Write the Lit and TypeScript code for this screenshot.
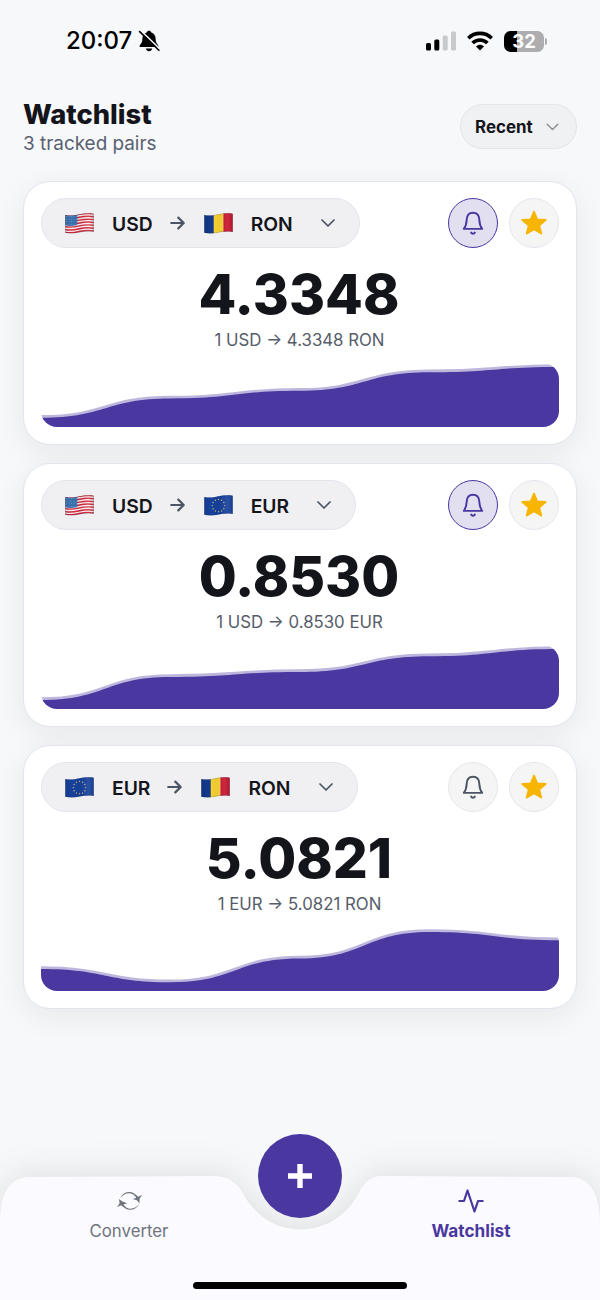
import { LitElement, html, css, svg } from "lit";
import { customElement, property } from "lit/decorators.js";

type Code = "USD" | "RON" | "EUR";

interface Pair {
  from: Code;
  to: Code;
  rate: string;
  alert: boolean;
  points: number[];
}

const PAIRS: Pair[] = [
  { from: "USD", to: "RON", rate: "4.3348", alert: true, points: [54.8, 35.5, 27.7, 9.2, 4] },
  { from: "USD", to: "EUR", rate: "0.8530", alert: true, points: [55, 32, 27, 11.2, 4] },
  { from: "EUR", to: "RON", rate: "5.0821", alert: false, points: [42, 55.3, 31.5, 5, 13.3] },
];

const WAVE = "M.3 2.2C5 3.6 9.6 2.6 14.5 1.5S24.500 .3 28.700 1V19.200C24.500 18.300 19.500 18.700 14.500 19.800S5 21.300 .3 20Z";

@customElement("currency-flag")
export class CurrencyFlag extends LitElement {
  @property() code: Code = "USD";

  static styles = css`
    :host { display: block; width: 29px; height: 22px; }
    svg { display: block; }
  `;

  private art() {
    if (this.code === "RON") {
      return svg`
        <rect width="10" height="22" fill="#12398b"></rect>
        <rect x="9.700" width="9.800" height="22" fill="#fcd533"></rect>
        <rect x="19.400" width="10" height="22" fill="#c8152d"></rect>`;
    }
    if (this.code === "EUR") {
      const stars = Array.from({ length: 12 }, (_, i) => {
        const a = (i * Math.PI) / 6;
        return svg`<circle cx=${14.5 + 6.2 * Math.sin(a)} cy=${10.9 - 6.2 * Math.cos(a)} r=".7" fill="#c9bd78"></circle>`;
      });
      return svg`<rect width="29" height="22" fill="#17419d"></rect>${stars}`;
    }
    const stripes = Array.from({ length: 7 }, (_, i) => {
      const y = 2.4 + i * 2.86;
      return svg`<path d="M0 ${y}C5 ${y + 1.4} 9.600 ${y + 0.4} 14.500 ${y - 0.7}S24.500 ${y - 1.9} 29 ${y - 1.2}" fill="none" stroke="#d5283d" stroke-width="1.450"></path>`;
    });
    const dots = Array.from({ length: 20 }, (_, i) => svg`<circle cx=${1.8 + (i % 5) * 2.4} cy=${4 + Math.floor(i / 5) * 2.5} r=".4" fill="#9cc0e2"></circle>`);
    return svg`
      <rect width="29" height="22" fill="#fbf3f4"></rect>${stripes}
      <path d="M0 1.500C4 3.600 9 2.800 12.300 1.700V12.200C8 13.400 4 13.800 0 12.600Z" fill="#3972b0"></path>${dots}`;
  }

  render() {
    return html`
      <svg width="29" height="22" viewBox="0 -.7 29 22">
        <defs>
          <clipPath id="wave"><path d=${WAVE}></path></clipPath>
          <linearGradient id="shade" x1="0" x2="1" y1="0" y2="0">
            <stop offset="0" stop-color="#000" stop-opacity=".1"></stop>
            <stop offset=".25" stop-color="#000" stop-opacity="0"></stop>
            <stop offset=".5" stop-color="#000" stop-opacity=".06"></stop>
            <stop offset=".8" stop-color="#fff" stop-opacity=".08"></stop>
            <stop offset="1" stop-color="#000" stop-opacity=".14"></stop>
          </linearGradient>
        </defs>
        <g clip-path="url(#wave)">
          ${this.art()}
          <rect width="29" height="22" fill="url(#shade)"></rect>
          <path d=${WAVE} fill="none" stroke="#1b2545" stroke-opacity=".3" stroke-width="1.200"></path>
        </g>
      </svg>`;
  }
}

@customElement("trend-area")
export class TrendArea extends LitElement {
  @property({ attribute: false }) points: number[] = [];

  static styles = css`
    :host { display: block; height: 64px; border-radius: 16px; overflow: hidden; }
    svg { display: block; width: 100%; height: 64px; }
    .fill { fill: #4a38a0; }
    .edge { fill: none; stroke: #4a38a0; stroke-opacity: .36; stroke-width: 5.4; }
  `;

  render() {
    const step = 518 / (this.points.length - 1);
    let line = `M0 ${this.points[0]}`;
    for (let i = 1; i < this.points.length; i++) {
      const mid = (i - 0.5) * step;
      line += `C${mid} ${this.points[i - 1]} ${mid} ${this.points[i]} ${i * step} ${this.points[i]}`;
    }
    return html`
      <svg viewBox="0 0 518 64" preserveAspectRatio="none">
        <path class="edge" d=${line}></path>
        <path class="fill" d="${line}V64H0Z"></path>
      </svg>`;
  }
}

@customElement("pair-card")
export class PairCard extends LitElement {
  @property({ attribute: false }) pair!: Pair;

  static styles = css`
    :host {
      display: block;
      box-sizing: border-box;
      height: 264px;
      padding: 16px 17px 17px;
      border: 1px solid #e2e5ee;
      border-radius: 27px;
      background: #fff;
      box-shadow: 0 8px 30px rgba(25, 30, 35, .07);
    }
    .top { display: flex; align-items: center; gap: 11.5px; }
    .pill {
      display: flex;
      align-items: center;
      box-sizing: border-box;
      height: 50px;
      padding: 0 24px 0 23px;
      border: 1px solid #e3e5ed;
      border-radius: 25px;
      background: #f0f0f3;
      margin-right: auto;
    }
    .code { margin-left: 18px; padding-top: 1px; font-size: 19.3px; font-weight: 600; color: #14151b; line-height: 24px; }
    .arrow { margin: 0 19px 0 17px; }
    .down { margin-left: 28px; }
    svg { display: block; }
    .round {
      display: grid;
      place-items: center;
      box-sizing: border-box;
      width: 50px;
      height: 50px;
      border: 1px solid #e5e7ee;
      border-radius: 50%;
      background: #f5f5f6;
      color: #4b5563;
    }
    .round.on { border: 1.5px solid #4a38a0; background: #e2dff0; color: #4a38a0; }
    .rate {
      margin-top: 16px;
      padding-right: 2px;
      text-align: center;
      font-size: 55px;
      line-height: 60px;
      font-weight: 800;
      color: #14151b;
    }
    .note {
      margin: 6px 0 13px;
      padding-right: 1px;
      text-align: center;
      font-size: 16.8px;
      line-height: 20px;
      color: #565c69;
    }
  `;

  render() {
    const p = this.pair;
    return html`
      <div class="top">
        <div class="pill">
          <currency-flag .code=${p.from}></currency-flag>
          <span class="code">${p.from}</span>
          <svg class="arrow" width="15" height="14" viewBox="0 0 15 14" fill="none" stroke="#4b5563" stroke-width="2.200" stroke-linecap="round" stroke-linejoin="round"><path d="M1.200 7H13.500M8.300 1.600 13.700 7 8.300 12.400"></path></svg>
          <currency-flag .code=${p.to}></currency-flag>
          <span class="code">${p.to}</span>
          <svg class="down" width="14" height="8" viewBox="0 0 14 8" fill="none" stroke="#4b5563" stroke-width="1.700" stroke-linecap="round" stroke-linejoin="round"><path d="M1 1 7 7 13 1"></path></svg>
        </div>
        <div class="round ${p.alert ? "on" : ""}">
          <svg width="24" height="26" viewBox="0 0 24 26" fill="none" stroke="currentColor" stroke-width="1.900" stroke-linecap="round" stroke-linejoin="round">
            <path d="M2.800 18.900C4.700 16.500 5.500 14.200 5.700 9.600C5.900 5.400 7.800 2.700 12 2.700S18.100 5.400 18.300 9.600C18.500 14.200 19.300 16.500 21.200 18.900Z"></path>
            <path d="M10.100 22.500C10.800 24.100 13.200 24.100 13.900 22.500"></path>
          </svg>
        </div>
        <div class="round">
          <svg width="26" height="26" viewBox="0 0 26 26" fill="#f7b500" stroke="#f7b500" stroke-width="2" stroke-linejoin="round">
            <path d="M13 1.800 16.100 9.400 24.600 10 18.100 15.400 20.200 23.500 13 19.100 5.800 23.500 7.900 15.400 1.400 10 9.900 9.400Z"></path>
          </svg>
        </div>
      </div>
      <div class="rate">${p.rate}</div>
      <div class="note">1 ${p.from} → ${p.rate} ${p.to}</div>
      <trend-area .points=${p.points}></trend-area>`;
  }
}

@customElement("app-root")
export class AppRoot extends LitElement {
  static styles = css`
    :host {
      display: flex;
      flex-direction: column;
      box-sizing: border-box;
      width: 600px;
      height: 1300px;
      overflow: hidden;
      background: #f7f8fa;
      font-family: Inter, "Liberation Sans", sans-serif;
      color: #14151b;
    }
    svg { display: block; }
    .status { display: flex; align-items: center; height: 82px; padding: 0 53px 0 66px; color: #000; }
    .time { font-size: 24px; font-weight: 550; line-height: 28px; width: 67px; white-space: nowrap; }
    .muted { margin: 0 auto 0 5px; }
    .wifi { margin: 0 11px 0 11px; }
    .battery {
      display: grid;
      place-items: center;
      box-sizing: border-box;
      width: 40px;
      height: 21px;
      padding-left: 1px;
      border-radius: 6.500px;
      background: linear-gradient(90deg, #000 13px, #adadaf 13px);
      color: #fff;
      font-size: 18.500px;
      font-weight: 700;
      line-height: 21px;
    }
    .nub { width: 2px; height: 7px; margin-left: 1.500px; border-radius: 0 3px 3px 0; background: #adadaf; }
    .head { display: flex; justify-content: space-between; align-items: flex-start; padding: 19px 23px 0; height: 80px; }
    .title { margin: 0; font-size: 27.300px; line-height: 28px; font-weight: 800; }
    .sub { padding-top: 1px; font-size: 18.900px; line-height: 28px; color: #596070; }
    .sort {
      display: flex;
      align-items: center;
      justify-content: space-between;
      box-sizing: border-box;
      width: 117px;
      height: 45px;
      margin-top: 3px;
      padding: 0 17px 0 14px;
      border: 1px solid #e3e5ec;
      border-radius: 23px;
      background: #f0f1f3;
      font-size: 16.900px;
      font-weight: 650;
    }
    .list { display: flex; flex-direction: column; gap: 18px; padding: 0 23px; flex: 1; }
    .nav { position: relative; height: 166px; display: grid; }
    .bar { grid-area: 1 / 1; overflow: visible; filter: drop-shadow(0 -4px 16px rgba(25, 32, 32, .11)); }
    .tabs { grid-area: 1 / 1; z-index: 1; display: flex; justify-content: space-between; padding: 53px 43px 0; }
    .tab { display: flex; flex-direction: column; align-items: center; width: 172px; font-size: 16.800px; line-height: 22px; color: #6f737d; }
    .tab svg { height: 28px; margin-bottom: 5px; }
    .tab.active { color: #4a38a0; font-weight: 650; font-size: 17.200px; }
    .fab {
      position: absolute;
      z-index: 2;
      left: 258px;
      top: 0;
      display: grid;
      place-items: center;
      width: 84px;
      height: 84px;
      border-radius: 50%;
      background: #4a38a0;
    }
    .home { position: absolute; z-index: 2; left: 193px; bottom: 11px; width: 214px; height: 7px; border-radius: 4px; background: #000; }
  `;

  render() {
    return html`
      <div class="status">
        <span class="time">20:07</span>
        <svg class="muted" width="22" height="22" viewBox="0 0 22 22">
          <path d="M1.500 16.200C1.500 14.800 4.300 13.500 4.300 9.500C4.300 5.500 6.200 3.300 8.700 2.500C9.100 .2 12.900 .2 13.300 2.500C15.800 3.300 17.700 5.500 17.700 9.500C17.700 13.500 20.500 14.800 20.500 16.200C20.500 16.800 20 17 19.500 17H2.500C2 17 1.500 16.800 1.500 16.200Z" fill="#000"></path>
          <path d="M7.700 18.600H14.300C13.800 20.300 12.600 21.200 11 21.200S8.200 20.300 7.700 18.600Z" fill="#000"></path>
          <path d="M2.400 .2 21.800 19" stroke="#f7f8fa" stroke-width="1.600"></path>
          <path d="M1.600 1.600 20.900 20.300" stroke="#000" stroke-width="1.600" stroke-linecap="round"></path>
        </svg>
        <svg width="30" height="20" viewBox="0 0 30 20">
          <rect x="0" y="12" width="5" height="7.500" rx="1.500"></rect>
          <rect x="8.300" y="8.600" width="5" height="10.900" rx="1.500"></rect>
          <rect x="16.700" y="4.600" width="5" height="14.900" rx="1.500" fill="#c8c9cb"></rect>
          <rect x="25" y=".5" width="5" height="19" rx="1.500" fill="#c8c9cb"></rect>
        </svg>
        <svg class="wifi" width="26" height="20" viewBox="0 0 26 20" fill="none" stroke="#000" stroke-width="3.600">
          <path d="M1.300 7.200C7.600 .7 18.400 .7 24.700 7.200"></path>
          <path d="M5.600 12.100C9.700 7.900 16.300 7.900 20.400 12.100"></path>
          <path d="M9 15.400C11.300 13.200 14.700 13.200 17 15.400L13 19.500Z" fill="#000" stroke="none"></path>
        </svg>
        <div class="battery">32</div>
        <div class="nub"></div>
      </div>
      <header class="head">
        <div>
          <h1 class="title">Watchlist</h1>
          <div class="sub">3 tracked pairs</div>
        </div>
        <div class="sort">
          <span>Recent</span>
          <svg width="13" height="8" viewBox="0 0 13 8" fill="none" stroke="#8b8e95" stroke-width="1.400" stroke-linecap="round" stroke-linejoin="round"><path d="M1.200 1.200 6.500 6.500 11.800 1.200"></path></svg>
        </div>
      </header>
      <main class="list">${PAIRS.map((p) => html`<pair-card .pair=${p}></pair-card>`)}</main>
      <nav class="nav">
        <svg class="bar" width="600" height="166" viewBox="0 0 600 166">
          <path fill="#fbfbff" d="M0 170V92C0 60 8 43.500 30 43L213 42C229 42 238 49 245 63C255 80 275 95.500 300 95.500C327 95.500 347 80 357 62C363 50 369 42 382 42L570 43C592 43.500 600 62 600 92V170Z"></path>
          <rect y="118" width="600" height="48" fill="#fafaff"></rect>
        </svg>
        <div class="tabs">
          <div class="tab">
            <svg width="28" height="28" viewBox="0 0 28 28" fill="currentColor">
              <path d="M5.200 11C8.800 3.400 19 3 23.200 10.800L21.800 11.600C18.200 4.800 10.400 4.200 5.200 11Z"></path>
              <path d="M27.200 7.800 24.600 11.800 24.400 16.200 21.800 13.200 17.800 12 21.500 10.800 20.800 8.200 23.600 9.700Z"></path>
              <path d="M24.300 16.800C20.600 24.600 10.600 25 6.500 17.200L7.900 16.400C11.400 23.200 19.200 23.600 24.300 16.800Z"></path>
              <path d="M2 20.200 4.600 16.200 4 12 7.400 14.600 12.200 16.200 8 17.400 8.800 20 5.800 18.300Z"></path>
            </svg>
            <span>Converter</span>
          </div>
          <div class="tab active">
            <svg width="28" height="28" viewBox="0 0 24 24" fill="none" stroke="currentColor" stroke-width="1.900" stroke-linecap="round" stroke-linejoin="round"><path d="M22 12H18L15 21 9 3 6 12H2"></path></svg>
            <span>Watchlist</span>
          </div>
        </div>
        <div class="fab">
          <svg width="24" height="24" viewBox="0 0 24 24" fill="none" stroke="#fff" stroke-width="5.400"><path d="M12 0V24M0 12H24"></path></svg>
        </div>
        <div class="home"></div>
      </nav>`;
  }
}
